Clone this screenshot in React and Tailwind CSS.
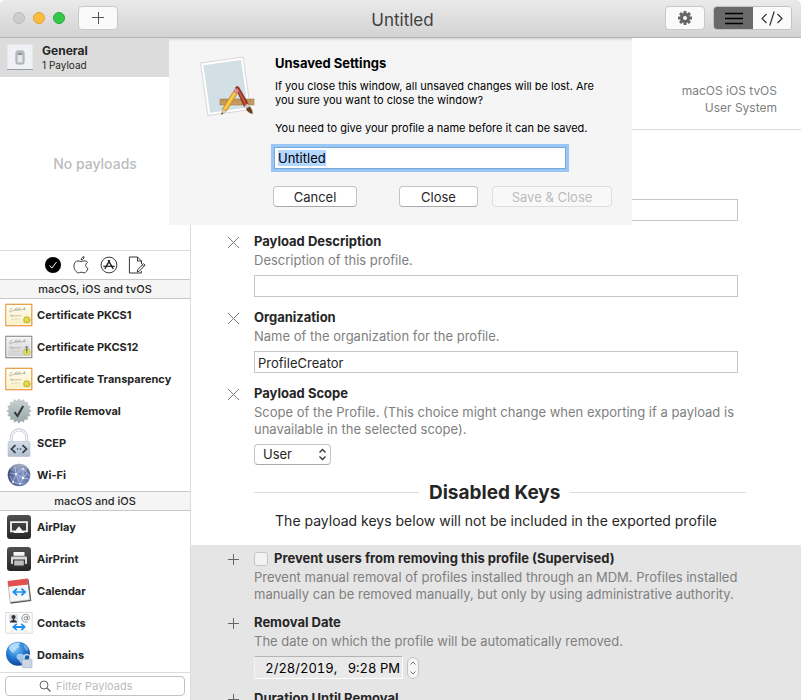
import { useEffect, useRef } from "react";

function CertificateIcon({ gray }) {
  const edge = gray ? "#909090" : "#e8983a";
  const top = gray ? "#f4f4f4" : "#fffdf4";
  const bottom = gray ? "#cfcfd2" : "#fbf0c4";
  const id = gray ? "certGray" : "certGold";
  return (
    <svg width="28" height="24" viewBox="0 0 28 24" aria-hidden="true">
      <defs>
        <linearGradient id={id} x1="0" y1="0" x2="0" y2="1">
          <stop offset="0" stopColor={top} />
          <stop offset="1" stopColor={bottom} />
        </linearGradient>
      </defs>
      <rect x="0.8" y="1.3" width="26" height="21.4" fill={`url(#${id})`} stroke={edge} strokeWidth="1.2" />
      <rect x="2" y="2.5" width="23.6" height="19" fill="none" stroke="#fff" strokeWidth="0.8" opacity="0.8" />
      <path d="M5 9c-1-2 1-4 2.500-3.500M5 9c1 0 2-1 2.500-1.500 0 1 .8 1 1.300 0s.7-.8 1 0l1.500-2.700-.6 2.700c.8.3 1.300-.6 1.800-1.300l-.3 1.300c.8 0 1-2.700 2-2.700s-.9 2.500-.4 2.700 1-1 1.800-1.200c-.5 1 .3 1.500 1 .3s.9 1 1.600.4l1.300-2.500-.5 2.400 2-.6" fill="none" stroke="#8f8878" strokeWidth="0.5" />
      <path d="M5 12.500c1-1.500 2.500-.6 1.500.4s.5 1 1.300 0 .9.6 1.500 0 .9.500 1.500 0 1 .5 1.800-.2 1 .4 1.600 0 1 .3 2-.6" fill="none" stroke="#a59d8c" strokeWidth="0.7" />
      <path d="M6 16.600l3-.8 1 .6 3-.6 2 .3" fill="none" stroke="#c8c0ac" strokeWidth="0.5" />
      <path d="M21.500 13.200l1.300.9 1.600-.1.400 1.500 1.100 1.100-.8 1.300-.1 1.500-1.600.3-1.400.9-1.300-.9-1.600-.2-.3-1.500-.9-1.300 1-1.200.3-1.400 1.600-.1z" fill={gray ? "#dcdc50" : "#d3c93a"} stroke="#b5ae38" strokeWidth="0.4" />
      <circle cx="21.600" cy="16.600" r="1.900" fill="#ecec80" opacity=".5" />
      {gray && <path d="M21.700 11v7M20.200 12.200h3M20.500 15h2.400" stroke="#777" strokeWidth="1" fill="none" />}
    </svg>
  );
}

function RemovalIcon() {
  const pts = Array.from({ length: 32 }, (_, i) => {
    const r = i % 2 ? 10 : 12.2;
    const a = (i * Math.PI) / 16 - Math.PI / 2;
    return `${14 + r * Math.cos(a)},${14 + r * Math.sin(a)}`;
  }).join(" ");
  return (
    <svg width="28" height="28" viewBox="0 0 28 28" aria-hidden="true">
      <defs>
        <linearGradient id="seal" x1="0" y1="0" x2="0" y2="1">
          <stop offset="0" stopColor="#c8d2d0" />
          <stop offset="1" stopColor="#98a6a9" />
        </linearGradient>
      </defs>
      <polygon points={pts} fill="url(#seal)" stroke="#a5afae" strokeWidth="0.5" />
      <path d="M9.500 15.200l3 3.800 5.700-10" fill="none" stroke="#30363a" strokeWidth="2" />
    </svg>
  );
}

function ScepIcon() {
  return (
    <svg width="28" height="30" viewBox="0 0 28 30" aria-hidden="true">
      <defs>
        <linearGradient id="lock" x1="0" y1="0" x2="0" y2="1">
          <stop offset="0" stopColor="#d5deea" />
          <stop offset="1" stopColor="#b2bfd0" />
        </linearGradient>
      </defs>
      <path d="M6.300 15V9.500a7.700 7.700 0 0 1 15.400 0V15" fill="none" stroke="#b8c1cc" strokeWidth="3" />
      <path d="M6.300 15V9.500a7.700 7.700 0 0 1 15.400 0V15" fill="none" stroke="#f0f4f8" strokeWidth="1.800" />
      <rect x="3" y="13.500" width="22" height="15" rx="1" fill="url(#lock)" stroke="#adb9c8" strokeWidth="0.5" />
      <path d="M10.500 17.200l-4 3.800 4 3.800M17.500 17.200l4 3.800-4 3.800" fill="none" stroke="#333a44" strokeWidth="1.700" />
      <circle cx="12.600" cy="21" r=".8" fill="#333a44" />
      <circle cx="15.600" cy="21" r=".8" fill="#333a44" />
    </svg>
  );
}

function WifiIcon() {
  return (
    <svg width="28" height="28" viewBox="0 0 28 28" aria-hidden="true">
      <defs>
        <radialGradient id="net" cx=".6" cy=".6" r=".65">
          <stop offset="0" stopColor="#8c9ed0" />
          <stop offset=".6" stopColor="#5e70a6" />
          <stop offset="1" stopColor="#3c4870" />
        </radialGradient>
        <linearGradient id="gloss" x1="0" y1="0" x2="0" y2="1">
          <stop offset="0" stopColor="#fff" stopOpacity=".85" />
          <stop offset="1" stopColor="#fff" stopOpacity=".1" />
        </linearGradient>
      </defs>
      <circle cx="14" cy="14" r="11.300" fill="url(#net)" />
      <ellipse cx="14" cy="7.500" rx="9" ry="5" fill="url(#gloss)" opacity=".65" />
      <path d="M5 12l6 1 7-6 4 5-4 5-7-4-3 8 7 2 3-6 6 1M18 7l0 10M8 21l-3-6M15 23l5-1M11 13l4 10M22 12l3 3M11 13L10 6" fill="none" stroke="#dfe7fb" strokeWidth=".6" opacity=".85" />
      <g fill="#fff"><circle cx="11" cy="13" r="1" /><circle cx="18" cy="17" r="1.200" /><circle cx="18" cy="8" r=".8" /><circle cx="8" cy="21" r=".9" /><circle cx="15" cy="23" r=".8" /></g>
    </svg>
  );
}

function DarkTile({ children }) {
  return (
    <svg width="28" height="28" viewBox="0 0 28 28" aria-hidden="true">
      <defs>
        <linearGradient id="dark" x1="0" y1="0" x2="0" y2="1">
          <stop offset="0" stopColor="#505050" />
          <stop offset="1" stopColor="#262626" />
        </linearGradient>
      </defs>
      <rect x="2" y="2" width="24" height="24" rx="3" fill="url(#dark)" />
      {children}
    </svg>
  );
}

function AirPlayIcon() {
  return (
    <DarkTile>
      <path d="M10 18.300H6V9.200h16v9.100h-4" fill="none" stroke="#f2f2f2" strokeWidth="1.800" />
      <path d="M14 13.200l5.600 6.800H8.400z" fill="#f2f2f2" />
    </DarkTile>
  );
}

function AirPrintIcon() {
  return (
    <DarkTile>
      <rect x="8.500" y="7" width="11" height="3.800" fill="#f5f5f5" />
      <rect x="6" y="11.500" width="16" height="7.500" rx="1" fill="#d8d8d8" />
      <rect x="8" y="14.500" width="12" height="6.800" fill="#333" />
      <rect x="9.200" y="15.500" width="9.600" height="5" fill="#bdbdbd" />
    </DarkTile>
  );
}

function CalendarIcon() {
  return (
    <svg width="28" height="28" viewBox="0 0 28 28" aria-hidden="true">
      <g transform="rotate(-7 14 14)">
        <rect x="4" y="4.500" width="21" height="21" fill="#555" />
        <rect x="4" y="3.500" width="20" height="20.500" fill="#f5f6f8" stroke="#aaa" strokeWidth=".5" />
        <rect x="4" y="2.600" width="20" height="6" fill="#e2504f" />
        <path d="M24.300 3v22" stroke="#666" strokeWidth=".8" />
      </g>
      <path d="M7 15l4.500-4 1.200 1.200L10.700 14.200h7l-2-2L17 11l4.500 4-4.500 4-1.300-1.200 2-2h-7l2 2L11.500 19z" fill="#1e8ff0" />
    </svg>
  );
}

function ContactsIcon() {
  return (
    <svg width="28" height="24" viewBox="0 0 28 24" aria-hidden="true">
      <rect x=".7" y="1.500" width="26.500" height="20.700" fill="#fdfdfd" stroke="#dedede" />
      <rect x="4" y="3.200" width="9" height="8.500" fill="#d9e0e6" />
      <circle cx="8.500" cy="6" r="2.100" fill="#333" />
      <path d="M5 11.500c0-2 2-2 2.800-2.500V7h1.400v2c.8.500 2.800.5 2.800 2.500z" fill="#333" />
      <g fill="none" stroke="#8a8a8a" strokeWidth=".9">
        <circle cx="20.700" cy="7.300" r="1.700" />
        <path d="M22.600 5.200l-.3 3.200c.2 1 2.200.4 2.200-1.800a3.900 3.900 0 1 0-1.800 4" />
      </g>
      <path d="M7 16l4.300-3.800 1.100 1.200-1.800 1.700h6.800l-1.800-1.700 1.100-1.200L21 16l-4.300 3.800-1.100-1.200 1.800-1.700h-6.800l1.800 1.700-1.100 1.200z" fill="#1e8ff0" />
      <g fill="#fff" stroke="#d8d8d8" strokeWidth=".7"><circle cx="7" cy="21.300" r="1.600" /><circle cx="21" cy="21.300" r="1.600" /></g>
    </svg>
  );
}

function DomainsIcon() {
  return (
    <svg width="28" height="28" viewBox="0 0 28 28" aria-hidden="true">
      <defs>
        <radialGradient id="earth" cx=".4" cy=".3" r=".75">
          <stop offset="0" stopColor="#7cc4f8" />
          <stop offset=".55" stopColor="#2076cf" />
          <stop offset="1" stopColor="#0b3f8c" />
        </radialGradient>
      </defs>
      <circle cx="13" cy="12.700" r="12" fill="url(#earth)" />
      <path d="M4 6c2-3 6-5 10-4.500 2 .5 1 2-.5 2.500l1 2-3 1.500-1 2.500-2-.5 1 3-3-1.500L4 8z" fill="#cfe9ff" opacity=".75" />
      <path d="M12 13.500l4-1 4 2-1 4-3 4.500-1.500-3-3-3z" fill="#cfe9ff" opacity=".7" />
      <path d="M18 3l4 2 1.500 4-2 1-2-3z" fill="#cfe9ff" opacity=".45" />
      <path d="M19 19v-2.500a3 3 0 0 1 6 0V19" fill="none" stroke="#d3dae3" strokeWidth="1.400" />
      <rect x="17" y="18.500" width="10" height="8.200" rx=".6" fill="#ccd6e4" stroke="#97a6ba" strokeWidth=".5" />
    </svg>
  );
}

const universal = [
  ["Certificate PKCS1", <CertificateIcon />],
  ["Certificate PKCS12", <CertificateIcon gray />],
  ["Certificate Transparency", <CertificateIcon />],
  ["Profile Removal", <RemovalIcon />],
  ["SCEP", <ScepIcon />],
  ["Wi-Fi", <WifiIcon />],
];

const macAndIos = [
  ["AirPlay", <AirPlayIcon />],
  ["AirPrint", <AirPrintIcon />],
  ["Calendar", <CalendarIcon />],
  ["Contacts", <ContactsIcon />],
  ["Domains", <DomainsIcon />],
];

function PayloadGroup({ title, items }) {
  return (
    <section>
      <h2 className="h-5 border-y border-[#c8c8c8] bg-[#f5f5f5] text-center text-[11px] leading-[18px] font-medium">{title}</h2>
      <ul>
        {items.map(([name, icon]) => (
          <li key={name} className="flex h-8 items-center gap-1 pl-[5px] text-[11px] font-bold">
            <span className="flex w-7 shrink-0 justify-center">{icon}</span>
            {name}
          </li>
        ))}
      </ul>
    </section>
  );
}

function Sidebar() {
  return (
    <aside className="flex w-[191px] shrink-0 flex-col border-r border-[#dcdcdc] bg-white">
      <div className="flex h-[212px] shrink-0 flex-col">
        <div className="flex h-[39px] shrink-0 items-center gap-2 bg-[#dcdcdc] pl-[7px]">
          <svg width="27" height="27" viewBox="0 0 27 27" aria-hidden="true">
            <rect x=".5" y=".5" width="25" height="25" fill="#f0f1f4" />
            <path d="M0 25.500h26" stroke="#9a9ea6" />
            <rect x="9" y="7" width="8" height="13" rx="1.500" fill="#c6c8cc" stroke="#a0a3a8" />
            <rect x="10.800" y="8.800" width="4.400" height="4" fill="#8e9196" />
            <rect x="10.800" y="11" width="4.400" height="7" rx=".5" fill="#e6e8ea" />
          </svg>
          <div>
            <div className="text-xs leading-[15px] font-bold">General</div>
            <div className="text-[10px] leading-[14px]">1 Payload</div>
          </div>
        </div>
        <div className="flex flex-1 items-center justify-center text-sm font-medium text-[#bcbcbc]">No payloads</div>
      </div>
      <nav className="flex h-[29px] shrink-0 items-center justify-center gap-[10px] border-t border-[#dcdcdc]">
        <button type="button" aria-label="All payloads">
          <svg width="18" height="18" viewBox="0 0 18 18"><circle cx="9" cy="9" r="8" fill="#000" /><path d="M5.500 9.500l2.300 2.600 4.700-6" fill="none" stroke="#fff" /></svg>
        </button>
        <button type="button" aria-label="Apple payloads">
          <svg width="18" height="18" viewBox="0 0 18 18" fill="none" stroke="#222" strokeWidth=".9">
            <path d="M9.300 5.600c1-.2 2-1 3.400-.8 1.300.1 2.200.7 2.800 1.500-2.600 1.600-2.200 5 .5 6.200-.8 2-2.200 4.400-3.700 4.400-1.200 0-1.600-.7-3-.7s-1.900.7-3 .7C4.300 16.900 1.900 13 1.900 9.900c0-3 1.900-5 4.200-5 1.300 0 2.300.7 3.200.7z" />
            <path d="M9.200 3.900C9.100 2.200 10.500.8 12 .7c.2 1.700-1.200 3.200-2.800 3.200z" />
          </svg>
        </button>
        <button type="button" aria-label="Application payloads">
          <svg width="18" height="18" viewBox="0 0 18 18" fill="none" stroke="#222" strokeWidth=".9">
            <circle cx="9" cy="9" r="7.900" />
            <path d="M9.800 4.200l-5 8.600M8.200 4.200l5 8.600" strokeWidth="1.400" />
            <path d="M3.300 10.300h11.400" strokeWidth="1.200" />
          </svg>
        </button>
        <button type="button" aria-label="Custom payloads">
          <svg width="18" height="18" viewBox="0 0 18 18" fill="none" stroke="#222" strokeWidth=".9">
            <path d="M13.500 8V5L9.500 1H1.400v16h12v-2M9.500 1v4h4" />
            <path d="M15.500 7.600l1.600 1.500-5.800 6-2.100.8.600-2.300zM14.300 8.900l1.500 1.500" />
          </svg>
        </button>
      </nav>
      <div className="min-h-0 flex-1 overflow-hidden">
        <PayloadGroup title="macOS, iOS and tvOS" items={universal} />
        <PayloadGroup title="macOS and iOS" items={macAndIos} />
      </div>
      <div className="relative flex h-7 shrink-0 items-start border-t border-[#dcdcdc] px-[5px] pt-[3px]">
        <svg className="absolute top-[7px] left-[39px]" width="12" height="12" viewBox="0 0 12 12" fill="none" stroke="#666" aria-hidden="true">
          <circle cx="5" cy="5" r="4" /><path d="M8 8l3.500 3.500" strokeWidth="1.200" />
        </svg>
        <input type="search" aria-label="Filter Payloads" placeholder="Filter Payloads" className="h-5 w-full rounded border border-[#c2c2c2] pl-[50px] text-[11px] outline-none placeholder:text-[#bcbcbc]" />
      </div>
    </aside>
  );
}

function Field({ title, text, id, enabled, checkbox, children }) {
  return (
    <div className="flex gap-[15px]">
      <button type="button" aria-label={enabled ? "Remove key" : "Add key"} className="mt-1 h-[11px] w-[11px] shrink-0">
        <svg width="11" height="11" viewBox="0 0 11 11" fill="none" stroke={enabled ? "#7d7d7d" : "#666"}>
          {enabled ? <path d="M0 0l11 11M11 0L0 11" /> : <path d="M0 5.500h11M5.500 0v11" />}
        </svg>
      </button>
      <div className="min-w-0 flex-1">
        <div className="flex h-[17px] items-center gap-[6px]">
          {checkbox && <input id={id} type="checkbox" className="h-[14px] w-[14px] appearance-none rounded-[3px] border border-[#c6c6c6] bg-[#f3f3f3]" />}
          <label htmlFor={id} className="text-[13px] leading-[17px] font-bold whitespace-nowrap">{title}</label>
        </div>
        {text && <p className="mt-[2px] text-[13px] leading-[17px] text-[#808080]">{text}</p>}
        {children && <div className="mt-[6px]">{children}</div>}
      </div>
    </div>
  );
}

const fieldInput = "block h-[22px] w-full border border-[#c6c6c6] bg-white px-[3px] pt-px text-[13px] outline-none";

function Editor() {
  return (
    <main className="flex min-w-0 flex-1 flex-col overflow-hidden bg-white">
      <header className="h-[92px] shrink-0 border-b border-[#dcdcdc] pt-11 pr-6 text-right text-xs leading-[17px] text-[#808080]">
        <div>macOS iOS tvOS</div>
        <div>User System</div>
      </header>
      <div className="flex shrink-0 flex-col gap-3 pt-[69px] pr-[63px] pl-[37px]">
        <div className="pl-[26px]">
          <input aria-label="Payload Display Name" className={fieldInput} />
        </div>
        <Field enabled id="description" title="Payload Description" text="Description of this profile.">
          <input id="description" className={fieldInput} />
        </Field>
        <Field enabled id="organization" title="Organization" text="Name of the organization for the profile.">
          <input id="organization" defaultValue="ProfileCreator" className={fieldInput} />
        </Field>
        <Field enabled id="scope" title="Payload Scope" text="Scope of the Profile. (This choice might change when exporting if a payload is unavailable in the selected scope).">
          <div className="relative w-[77px]">
            <select id="scope" defaultValue="User" className="block h-[21px] w-full appearance-none rounded border border-[#c4c4c4] border-b-[#aaa] bg-white pl-2 text-[13px] leading-[17px] outline-none">
              <option>User</option>
              <option>System</option>
            </select>
            <svg className="pointer-events-none absolute top-1 right-1" width="9" height="13" viewBox="0 0 9 13" fill="none" stroke="#333" strokeWidth="1.300" aria-hidden="true">
              <path d="M1.500 4.500l3-3 3 3M1.500 8.500l3 3 3-3" />
            </svg>
          </div>
        </Field>
      </div>
      <section className="shrink-0 pt-[14px] pr-[63px] pb-[14px] pl-[63px]">
        <div className="-mr-2 flex h-[27px] items-center gap-[10px]">
          <div className="h-px w-[165px] bg-[#dcdcdc]" />
          <h2 className="text-[19px] leading-[27px] font-bold">Disabled Keys</h2>
          <div className="h-px flex-1 bg-[#dcdcdc]" />
        </div>
        <p className="mt-[5px] text-center text-sm leading-5 whitespace-nowrap">The payload keys below will not be included in the exported profile</p>
      </section>
      <div className="flex grow shrink-0 flex-col gap-[11px] bg-[#e5e5e5] pt-[5px] pr-[63px] pl-[37px]">
        <Field id="prevent" checkbox title="Prevent users from removing this profile (Supervised)" text="Prevent manual removal of profiles installed through an MDM. Profiles installed manually can be removed manually, but only by using administrative authority." />
        <Field id="date" title="Removal Date" text="The date on which the profile will be automatically removed.">
          <div className="flex items-center gap-1">
            <input id="date" defaultValue="2/28/2019,   9:28 PM" className="h-[23px] w-[149px] border border-t-[#b4b4b4] border-r-white border-b-white border-l-[#f2f2f2] bg-[#e9e9e9] px-[2px] pt-px text-right text-[13px] text-black tabular-nums outline-none" />
            <div className="flex h-[22px] w-3 flex-col overflow-hidden rounded-md border border-[#c4c4c4] bg-[#f5f5f5]">
              <button type="button" aria-label="Later" className="flex flex-1 items-center justify-center">
                <svg width="6" height="4" viewBox="0 0 6 4" fill="none" stroke="#777"><path d="M.5 3.500L3 1l2.500 2.500" /></svg>
              </button>
              <button type="button" aria-label="Earlier" className="flex flex-1 items-center justify-center">
                <svg width="6" height="4" viewBox="0 0 6 4" fill="none" stroke="#777"><path d="M.5.5L3 3 5.500.5" /></svg>
              </button>
            </div>
          </div>
        </Field>
        <Field title="Duration Until Removal" />
      </div>
    </main>
  );
}

const toolButton = "flex h-6 items-center justify-center bg-[#fafafa]";

function TitleBar() {
  return (
    <header className="flex h-[38px] shrink-0 items-center rounded-t-[5px] border-b border-[#b1b1b1] bg-linear-to-b from-[#ebeaeb] to-[#d4d3d4] pr-[9px] pb-px pl-[13px]">
      <div className="flex flex-1 items-center">
        <div className="flex gap-2">
          <span className="h-3 w-3 rounded-full border border-[#bcbbbc] bg-[#cecdce]" />
          <span className="h-3 w-3 rounded-full border border-[#e2a032] bg-[#fdbb40]" />
          <span className="h-3 w-3 rounded-full border border-[#27aa35] bg-[#34c84a]" />
        </div>
        <button type="button" aria-label="Add" className={`${toolButton} ml-[13px] w-10 rounded border border-[#c9c8c9]`}>
          <svg width="12" height="12" viewBox="0 0 12 12" stroke="#555"><path d="M0 5.500h12M6.500 0v12" /></svg>
        </button>
      </div>
      <h1 className="pt-[3px] text-[17px] leading-6 text-[#404040]">Untitled</h1>
      <div className="flex flex-1 items-center justify-end gap-2">
        <button type="button" aria-label="Settings" className={`${toolButton} w-10 rounded border border-[#c9c8c9]`}>
          <svg width="14" height="14" viewBox="-7 -7 14 14" fill="#666">
            {[0, 45, 90, 135].map((a) => <rect key={a} x="-1.500" y="-7" width="3" height="14" rx=".5" transform={`rotate(${a})`} />)}
            <circle r="5" />
            <circle r="2" fill="#fafafa" />
          </svg>
        </button>
        <div className="flex overflow-hidden rounded border border-[#c2c1c2]">
          <button type="button" aria-label="List view" className="flex h-[22px] w-[39px] items-center justify-center bg-[#696969]">
            <svg width="18" height="13" viewBox="0 0 18 13" stroke="#000" strokeWidth="1.500"><path d="M0 1.500h18M0 6.500h18M0 11.500h18" /></svg>
          </button>
          <button type="button" aria-label="Source view" className="flex h-[22px] w-[38px] items-center justify-center bg-[#fafafa]">
            <svg width="22" height="15" viewBox="0 0 22 15" fill="none" stroke="#333" strokeWidth="1.200"><path d="M5.500 3L1 7.500 5.500 12M16.500 3L21 7.500 16.500 12M13.200.5L8.800 14.500" /></svg>
          </button>
        </div>
      </div>
    </header>
  );
}

function AppIcon() {
  return (
    <svg className="shrink-0" width="60" height="64" viewBox="0 1 60 64" aria-hidden="true">
      <g transform="rotate(-8 26 32)">
        <rect x="6" y="6" width="43" height="53" fill="#fff" stroke="#d4d4d4" strokeWidth=".9" />
        <rect x="8.500" y="8.500" width="38" height="48" fill="#d2dfe5" />
      </g>
      <rect x="22" y="45" width="34" height="6" fill="#c79a62" stroke="#9d7440" strokeWidth=".5" />
      <path d="M25 45v2M28 45v3M31 45v2M34 45v3M37 45v2M40 45v3M43 45v2M46 45v3M49 45v2M52 45v3" stroke="#8f6a3a" strokeWidth=".5" />
      <path d="M37.500 33.500c1-1.500 2.500-1.500 3.500 0l9.500 17-4 2.500z" fill="#a93726" stroke="#5a1c14" strokeWidth=".6" />
      <path d="M39 34l9 17" stroke="#e07a60" strokeWidth=".8" />
      <path d="M46.300 52l3.700-2.400 1.700 2.800-3.700 2.300z" fill="#c9c9c9" />
      <path d="M48 54.700l3.700-2.300c2 1.600 3 4.300 3 7.600-3.200-.6-5.700-2.600-6.700-5.300z" fill="#6b4020" />
      <path d="M35.300 37.500l4 2.300L28.500 57l-3.800-2.500z" fill="#f3b52e" stroke="#a87414" strokeWidth=".5" />
      <path d="M36.800 39L26.500 55.500" stroke="#ffe08a" strokeWidth="1" />
      <path d="M36.500 35.600l1.200-1.300 3 1.800-.6 1.900-1 1.600-3.600-2.200z" fill="#e58c9c" stroke="#8a6a70" strokeWidth=".4" />
      <path d="M24.700 54.500l3.800 2.500-5 3.500z" fill="#ecd0a0" stroke="#9d7440" strokeWidth=".4" />
      <path d="M24 58.500l1.200.8-1.900 1.400z" fill="#333" />
    </svg>
  );
}

const sheetButton = "h-[21px] rounded border text-[13px] leading-[18px]";

function SaveSheet() {
  const name = useRef(null);
  useEffect(() => {
    name.current.focus();
    name.current.select();
  }, []);
  return (
    <div role="dialog" aria-labelledby="sheet-title" className="absolute inset-x-0 top-[38px] mx-auto flex h-[187px] w-[463px] bg-[#f5f5f5] pt-[17px] pr-5 pl-[29px] shadow-[inset_0_3px_3px_-2px_rgba(0,0,0,0.18)]">
      <AppIcon />
      <div className="ml-auto w-[339px]">
        <h2 id="sheet-title" className="pl-[2px] text-[13px] leading-[17px] font-bold text-black">Unsaved Settings</h2>
        <div className="mt-[7px] pl-[2px] text-[11px] leading-[14px] text-black">
          <p>If you close this window, all unsaved changes will be lost. Are you sure you want to close the window?</p>
          <label htmlFor="profile-name" className="mt-[14px] block">You need to give your profile a name before it can be saved.</label>
        </div>
        <input ref={name} id="profile-name" defaultValue="Untitled" className="mt-3 ml-px block h-[22px] w-[292px] border border-[#76a9dc] bg-white px-[3px] text-[13px] text-black ring-[3px] ring-[#9ac6f5] outline-none selection:bg-[#b3d7ff] selection:text-black" />
        <div className="mt-[17px] flex">
          <button type="button" className={`${sheetButton} mr-auto w-[84px] border-[#c4c4c4] border-b-[#aaa] bg-white`}>Cancel</button>
          <button type="button" className={`${sheetButton} mr-[14px] w-[79px] border-[#c4c4c4] border-b-[#aaa] bg-white`}>Close</button>
          <button type="button" disabled className={`${sheetButton} w-[120px] border-[#dedede] bg-[#f8f8f8] text-[#bcbcbc]`}>Save &amp; Close</button>
        </div>
      </div>
    </div>
  );
}

export default function App() {
  return (
    <div className="relative flex h-screen flex-col overflow-hidden bg-white font-[Inter,sans-serif] text-[#262626]">
      <TitleBar />
      <div className="flex min-h-0 flex-1">
        <Sidebar />
        <Editor />
      </div>
      <SaveSheet />
    </div>
  );
}
